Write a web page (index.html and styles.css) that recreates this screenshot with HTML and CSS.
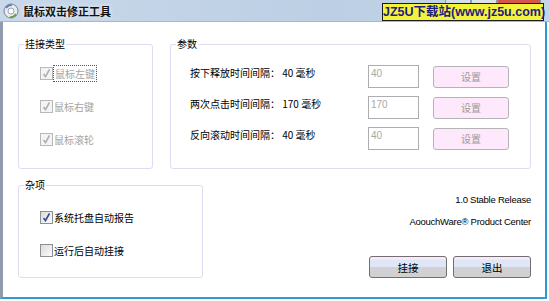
FILE: index.html
```html
<!DOCTYPE html>
<html lang="zh-CN">
<head>
  <meta charset="UTF-8">
  <title>鼠标双击修正工具</title>
  <link rel="stylesheet" href="styles.css">
</head>
<body>
  <div class="window">
    <div class="titlebar">
      <svg class="app-icon" width="16" height="16" viewBox="0 0 16 16">
        <circle cx="8" cy="8" r="7" fill="#e8ecf0" stroke="#7a8490" stroke-width="1"/>
        <circle cx="8" cy="8" r="3" fill="#fff" stroke="#9aa4ae" stroke-width="1"/>
        <path d="M3 5 Q5 2 9 2" fill="none" stroke="#4a7ec0" stroke-width="1.5"/>
        <path d="M13 11 Q11 14 7 14" fill="none" stroke="#6a9a40" stroke-width="1.5"/>
      </svg>
      <div class="title">鼠标双击修正工具</div>
      <div class="controls">
        <div class="ctl min"></div>
        <div class="ctl max"></div>
        <div class="ctl close"></div>
      </div>
    </div>

    <div class="client">
      <div class="top-row">
        <fieldset class="group hook">
          <legend>挂接类型</legend>
          <div class="check-list">
            <label class="check disabled"><span class="box checked"></span><span class="focus">鼠标左键</span></label>
            <label class="check disabled"><span class="box checked"></span><span>鼠标右键</span></label>
            <label class="check disabled"><span class="box checked"></span><span>鼠标滚轮</span></label>
          </div>
        </fieldset>

        <fieldset class="group params">
          <legend>参数</legend>
          <div class="param-list">
            <div class="param-row">
              <div class="param-label">按下释放时间间隔： 40 毫秒</div>
              <div class="field">40</div>
              <div class="btn-set">设置</div>
            </div>
            <div class="param-row">
              <div class="param-label">两次点击时间间隔： 170 毫秒</div>
              <div class="field">170</div>
              <div class="btn-set">设置</div>
            </div>
            <div class="param-row">
              <div class="param-label">反向滚动时间间隔： 40 毫秒</div>
              <div class="field">40</div>
              <div class="btn-set">设置</div>
            </div>
          </div>
        </fieldset>
      </div>

      <div class="bottom-row">
        <fieldset class="group misc">
          <legend>杂项</legend>
          <div class="check-list">
            <label class="check"><span class="box checked on"></span><span>系统托盘自动报告</span></label>
            <label class="check"><span class="box"></span><span>运行后自动挂接</span></label>
          </div>
        </fieldset>

        <div class="about">
          <div class="about-line">1.0 Stable Release</div>
          <div class="about-line">AoouchWare® Product Center</div>
          <div class="actions">
            <div class="btn">挂接</div>
            <div class="btn">退出</div>
          </div>
        </div>
      </div>
    </div>

    <div class="watermark">JZ5U下载站(www.jz5u.com)</div>
  </div>
</body>
</html>
```

FILE: styles.css
```css
body {
  margin: 0;
  font-family: "Noto Sans CJK SC", "Liberation Sans", sans-serif;
  font-size: 10px;
  background: #fff;
}
.window {
  position: relative;
  width: 549px;
  height: 301px;
  background: #fff;
  overflow: hidden;
}
.titlebar {
  height: 22px;
  box-sizing: border-box;
  display: flex;
  align-items: center;
  padding-left: 3px;
  background: linear-gradient(to right, #c9d8ea, #bccfe4 60%, #c4d5e8);
  border-bottom: 1px solid #a9b8c8;
}
.app-icon {
  flex: none;
}
.title {
  margin-left: 4px;
  font-size: 11px;
  font-weight: bold;
  color: #111;
  text-shadow: 0 0 4px #fff;
}
.controls {
  margin-left: auto;
  display: flex;
  align-self: flex-start;
  margin-right: 8px;
}
.ctl {
  height: 18px;
  border: 1px solid #8a9ab0;
  border-top: none;
  box-sizing: border-box;
}
.ctl.min {
  width: 26px;
  background: #d4dfec;
  border-radius: 0 0 0 4px;
}
.ctl.max {
  width: 26px;
  background: #dae3ee;
}
.ctl.close {
  width: 44px;
  background: #d4584a;
  border-radius: 0 0 4px 0;
}

.client {
  box-sizing: border-box;
  width: 547px;
  height: 277px;
  border-left: 3px solid #8e9cab;
  border-right: 2px solid #2f9bd4;
  border-bottom: 2px solid #2f9bd4;
  padding: 15px 14px 0 15px;
}
.top-row {
  display: flex;
  gap: 17px;
}
.bottom-row {
  display: flex;
  margin-top: 9px;
}

.group {
  box-sizing: border-box;
  margin: 0;
  padding: 0;
  border: 1px solid #dedcf2;
  border-radius: 3px;
  min-width: 0;
}
.group legend {
  margin-left: 5px;
  padding: 0 1px;
  line-height: 14px;
  color: #000;
}
.hook {
  width: 135px;
  height: 132px;
}
.params {
  width: 361px;
  height: 132px;
}
.misc {
  width: 185px;
  height: 100px;
}

.check-list {
  display: flex;
  flex-direction: column;
  gap: 17px;
  padding: 14px 0 0 21px;
}
.misc .check-list {
  padding-top: 17px;
}
.check {
  display: flex;
  align-items: center;
  height: 16px;
  color: #000;
}
.check.disabled {
  color: #a4a4a4;
}
.box {
  width: 13px;
  height: 13px;
  box-sizing: border-box;
  border: 1px solid #8e8f8f;
  background: linear-gradient(135deg, #dcdcdc, #fbfbfb);
  margin-right: 1px;
  position: relative;
}
.check.disabled .box {
  border-color: #b8b8b8;
  background: #f4f4f4;
}
.box.checked::after {
  content: "";
  position: absolute;
  left: 2px;
  top: 1px;
  width: 7px;
  height: 9px;
  background: url("data:image/svg+xml;utf8,<svg xmlns='http://www.w3.org/2000/svg' width='7' height='9' viewBox='0 0 7 9'><path d='M0.5 5 L2.5 7.5 L6.5 0.5' fill='none' stroke='%23b0b0b0' stroke-width='1.6'/></svg>") no-repeat;
}
.box.checked.on::after {
  background: url("data:image/svg+xml;utf8,<svg xmlns='http://www.w3.org/2000/svg' width='7' height='9' viewBox='0 0 7 9'><path d='M0.5 5 L2.5 7.5 L6.5 0.5' fill='none' stroke='%23344c8c' stroke-width='1.6'/></svg>") no-repeat;
}
.focus {
  outline: 1px dotted #555;
  outline-offset: 0;
  padding: 0 1px;
}

.param-list {
  display: flex;
  flex-direction: column;
  gap: 8px;
  padding: 14px 0 0 19px;
}
.param-row {
  display: flex;
  align-items: center;
  height: 23px;
}
.param-label {
  width: 178px;
  align-self: flex-start;
  line-height: 16px;
  color: #000;
}
.field {
  box-sizing: border-box;
  width: 51px;
  height: 23px;
  border: 1px solid #abadb3;
  padding: 1px 0 0 2px;
  line-height: 14px;
  color: #a8a8a8;
  font-family: "Liberation Sans", sans-serif;
  font-size: 10px;
}
.btn-set {
  box-sizing: border-box;
  margin-left: 14px;
  width: 76px;
  height: 22px;
  border: 1px solid #b4b4b8;
  border-radius: 3px;
  background: #fde9fb;
  color: #9a9a9a;
  display: flex;
  align-items: center;
  justify-content: center;
}

.about {
  flex: 1;
  display: flex;
  flex-direction: column;
  align-items: flex-end;
  padding-top: 15px;
  font-family: "Liberation Sans", sans-serif;
  font-size: 9.5px;
  letter-spacing: -0.25px;
}
.about-line {
  line-height: 14px;
  color: #000;
}
.about-line + .about-line {
  margin-top: 8px;
}
.actions {
  display: flex;
  gap: 6px;
  margin-top: 27px;
}
.btn {
  box-sizing: border-box;
  width: 78px;
  height: 22px;
  border: 1px solid #707070;
  border-radius: 3px;
  background: linear-gradient(to bottom, #fbe8fb 0, #fbe8fb 2px, #dfe6f6 3px, #dfe6f6 50%, #d2d2d4 50%, #d0d0d2 100%);
  font-family: "Noto Sans CJK SC", sans-serif;
  font-size: 10.5px;
  letter-spacing: 0;
  color: #000;
  display: flex;
  align-items: center;
  justify-content: center;
}

.watermark {
  position: absolute;
  left: 382px;
  top: 3px;
  width: 162px;
  height: 18px;
  box-sizing: border-box;
  border: 1px solid #1c1c1c;
  background: #f3f33c;
  color: #1e1e7c;
  font-family: "Liberation Sans", "Noto Sans CJK SC", sans-serif;
  font-weight: bold;
  font-size: 12.5px;
  line-height: 16px;
  text-align: center;
  white-space: nowrap;
}
```
